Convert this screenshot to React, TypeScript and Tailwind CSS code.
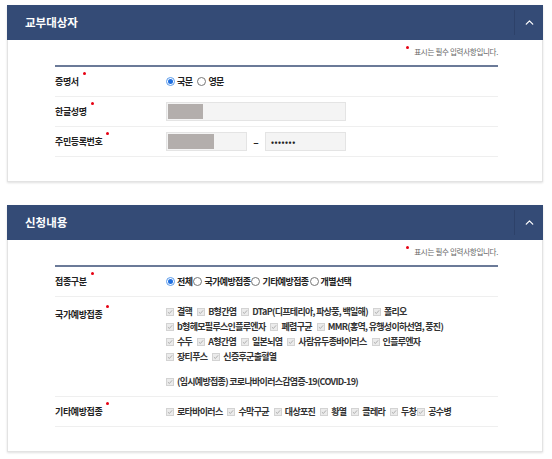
import { ChevronUp } from "lucide-react";
import type { ReactNode } from "react";

const NATIONAL: string[][] = [
  ["결핵", "B형간염", "DTaP(디프테리아, 파상풍, 백일해)", "폴리오"],
  ["b형헤모필루스인플루엔자", "폐렴구균", "MMR(홍역, 유행성이하선염, 풍진)"],
  ["수두", "A형간염", "일본뇌염", "사람유두종바이러스", "인플루엔자"],
  ["장티푸스", "신증후군출혈열"],
];

const OTHER = ["로타바이러스", "수막구균", "대상포진", "황열", "콜레라"];

function Panel({ title, children }: { title: string; children: ReactNode }) {
  return (
    <div className="w-[536px] ml-[7px] shadow-[0_1px_2px_rgba(0,0,0,0.12)]">
      {/* Header */}
      <div className="flex h-[35px] items-stretch bg-[#344b76]">
        <div className="flex flex-1 items-center pl-[18px] text-[11.5px] font-bold text-white">{title}</div>
        <div className="my-[5px] w-px bg-[#2d4169]" />
        <div className="flex w-[28px] items-center justify-center">
          <ChevronUp className="h-[13px] w-[13px] text-white" strokeWidth={2.3} />
        </div>
      </div>
      {/* Body */}
      <div className="border border-t-0 border-[#e3e3e3] bg-white pl-[47px] pr-[44px] pb-[24px]">
        <div className="flex h-[25px] items-start justify-end pt-[7px] text-[7.5px] tracking-[-0.3px] text-[#666]">
          <span className="mr-[5px] mt-[-1px] inline-block h-[3px] w-[3px] rounded-full bg-[#e60012]" />
          <span className="leading-[10px]">표시는 필수 입력사항입니다.</span>
        </div>
        <div className="border-t-2 border-[#6b7a98]">{children}</div>
      </div>
    </div>
  );
}

function Row({ label, children, tall }: { label: string; children: ReactNode; tall?: boolean }) {
  return (
    <div className={`flex border-b border-[#efefef] ${tall ? "items-start py-[7px]" : "min-h-[30px] items-center"}`}>
      <div className={`flex w-[111px] shrink-0 items-center ${tall ? "h-[15px] mt-[3px]" : "pt-[1px]"}`}>
        <span className="relative text-[9px] font-semibold leading-[12px] tracking-[-0.4px] text-[#222]">
          {label}
          <span className="absolute -right-[7px] -top-[4px] h-[3px] w-[3px] rounded-full bg-[#e60012]" />
        </span>
      </div>
      <div className="flex-1">{children}</div>
    </div>
  );
}

function Radio({ checked, label }: { checked?: boolean; label: string }) {
  return (
    <span className="inline-flex items-center">
      {checked ? (
        <span className="flex h-[9px] w-[9px] items-center justify-center rounded-full border border-[#5b9bea] bg-white">
          <span className="h-[5px] w-[5px] rounded-full bg-[#1f6fe0]" />
        </span>
      ) : (
        <span className="h-[9px] w-[9px] rounded-full border border-[#777] bg-white" />
      )}
      <span className="ml-[2px] text-[9px] font-semibold tracking-[-0.6px] text-[#222]">{label}</span>
    </span>
  );
}

function Check({ label }: { label: string }) {
  return (
    <span className="inline-flex items-center">
      <span className="flex h-[8px] w-[8px] items-center justify-center border border-[#d3d3d3] bg-[#ebebeb]">
        <svg viewBox="0 0 8 8" className="h-[6px] w-[6px]">
          <path d="M1.2 4.2 L3.2 6 L6.8 1.8" fill="none" stroke="#a9a9a9" strokeWidth="1.2" />
        </svg>
      </span>
      <span className="ml-[3px] text-[9px] font-semibold tracking-[-0.7px] text-[#333]">{label}</span>
    </span>
  );
}

function Field({ width, mask, children }: { width: string; mask?: string; children?: ReactNode }) {
  return (
    <div className={`flex h-[19px] items-center border border-[#e4e4e4] bg-[#f4f4f4] ${width}`}>
      {mask && <div className={`ml-[1px] h-[15px] bg-[#b3aeac] ${mask}`} />}
      {children}
    </div>
  );
}

export default function App() {
  return (
    <div className="min-h-screen bg-white pt-[5px] font-['Noto_Sans_CJK_KR','Noto_Sans',sans-serif]">
      <Panel title="교부대상자">
        <Row label="증명서">
          <div className="flex items-center gap-[5px]">
            <Radio checked label="국문" />
            <Radio label="영문" />
          </div>
        </Row>
        <Row label="한글성명">
          <Field width="w-[180px]" mask="w-[35px]" />
        </Row>
        <Row label="주민등록번호">
          <div className="flex items-center">
            <Field width="w-[81px]" mask="w-[46px]" />
            <span className="w-[18px] text-center text-[10px] font-bold text-[#222]">–</span>
            <Field width="w-[81px]">
              <span className="ml-[5px] text-[8px] font-bold tracking-[0.5px] text-[#222]">•••••••</span>
            </Field>
          </div>
        </Row>
      </Panel>

      <div className="h-[23px]" />

      <Panel title="신청내용">
        <Row label="접종구분">
          <div className="flex items-center gap-[1px]">
            <Radio checked label="전체" />
            <Radio label="국가예방접종" />
            <Radio label="기타예방접종" />
            <Radio label="개별선택" />
          </div>
        </Row>
        <Row label="국가예방접종" tall>
          <div className="flex flex-col">
            {NATIONAL.map((line, i) => (
              <div key={i} className="flex h-[15px] items-center gap-[5px]">
                {line.map((v) => (
                  <Check key={v} label={v} />
                ))}
              </div>
            ))}
            <div className="mt-[10px] flex h-[15px] items-center">
              <Check label="(임시예방접종) 코로나바이러스감염증-19(COVID-19)" />
            </div>
          </div>
        </Row>
        <Row label="기타예방접종">
          <div className="flex items-center gap-[5px]">
            {OTHER.map((v) => (
              <Check key={v} label={v} />
            ))}
            <span className="flex items-center gap-[1px]">
              <Check label="두창" />
              <Check label="공수병" />
            </span>
          </div>
        </Row>
      </Panel>
    </div>
  );
}
